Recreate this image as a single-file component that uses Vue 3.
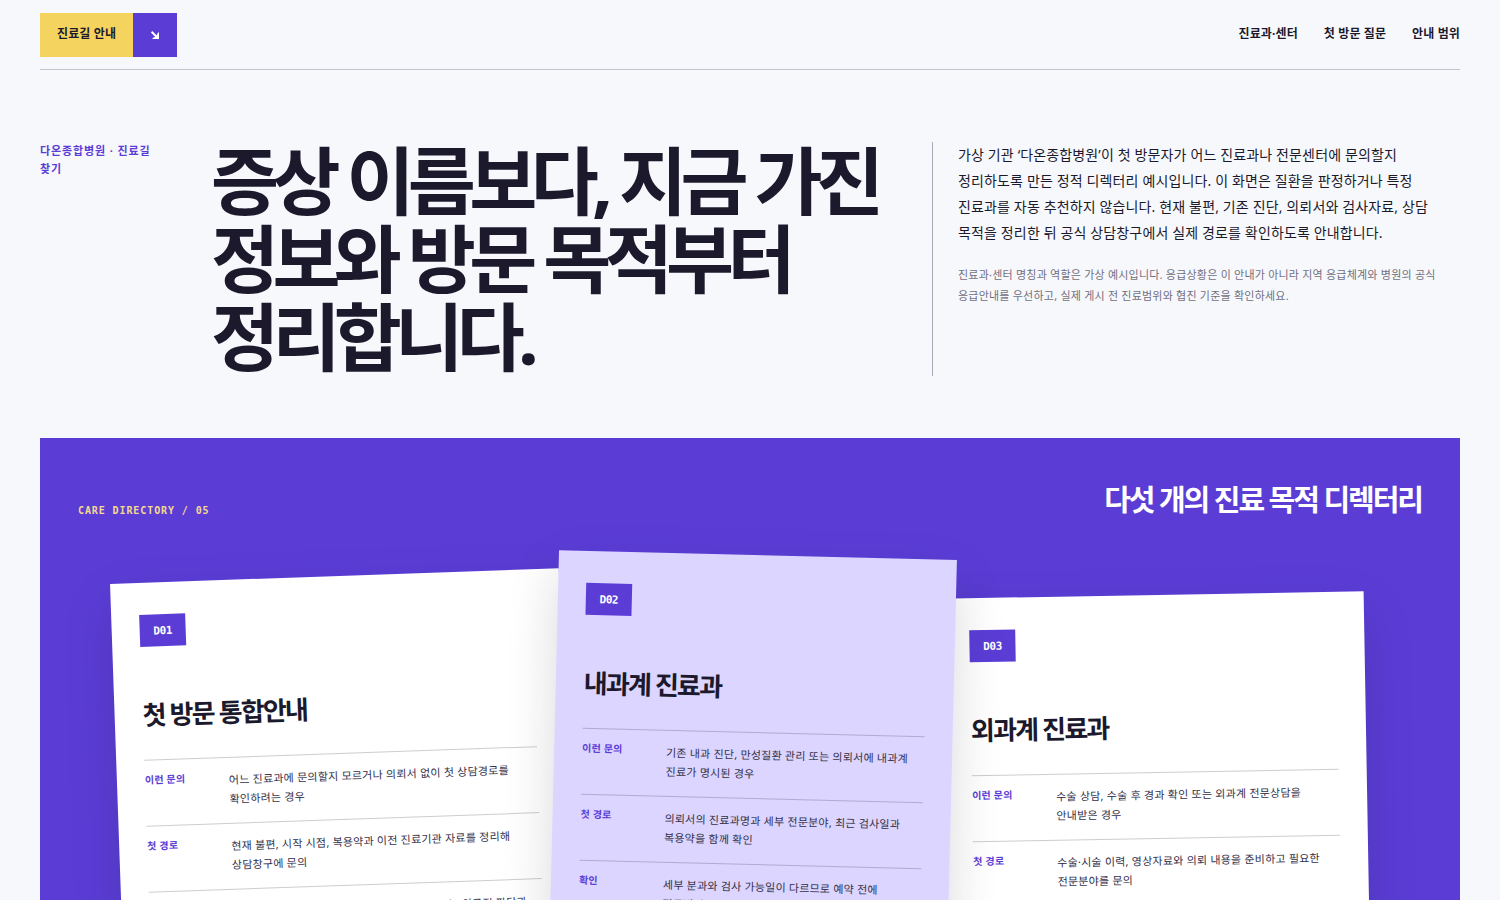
<script setup>
const links = [
  { label: '진료과·센터', href: '#directory' },
  { label: '첫 방문 질문', href: '#questions' },
  { label: '안내 범위', href: '#scope' }
]

const cards = [
  {
    code: 'D01',
    title: '첫 방문 통합안내',
    tone: 'first',
    rows: [
      ['이런 문의', '어느 진료과에 문의할지 모르거나 의뢰서 없이 첫 상담경로를 확인하려는 경우'],
      ['첫 경로', '현재 불편, 시작 시점, 복용약과 이전 진료기관 자료를 정리해 상담창구에 문의'],
      ['확인', '상담창구는 접수 경로만을 안내하므로, 증상 또는 의료적 판단과 예약 확정은 진료과에서 확인']
    ]
  },
  {
    code: 'D02',
    title: '내과계 진료과',
    tone: 'second',
    rows: [
      ['이런 문의', '기존 내과 진단, 만성질환 관리 또는 의뢰서에 내과계 진료가 명시된 경우'],
      ['첫 경로', '의뢰서의 진료과명과 세부 전문분야, 최근 검사일과 복용약을 함께 확인'],
      ['확인', '세부 분과와 검사 가능일이 다르므로 예약 전에 진료범위를 확인']
    ]
  },
  {
    code: 'D03',
    title: '외과계 진료과',
    tone: 'third',
    rows: [
      ['이런 문의', '수술 상담, 수술 후 경과 확인 또는 외과계 전문상담을 안내받은 경우'],
      ['첫 경로', '수술·시술 이력, 영상자료와 의뢰 내용을 준비하고 필요한 전문분야를 문의'],
      ['확인', '수술 여부와 일정은 진료 후 담당 의료진과 확인']
    ]
  }
]
</script>

<template>
  <div class="page">
    <header class="bar">
      <a class="brand" href="#top">
        <span class="brand-name">진료길 안내</span>
        <span class="brand-mark">
          <svg viewBox="0 0 10 10" aria-hidden="true">
            <path d="M1.6 1.8 L6.8 7" />
            <path class="fill" d="M9 2 V9 H2 L3.8 7.2 H7.2 V3.8 Z" />
            <path class="fill" d="M8 4 V8 H4 Z" />
          </svg>
        </span>
      </a>
      <nav class="nav" aria-label="주요 메뉴">
        <a v-for="l in links" :key="l.href" :href="l.href">{{ l.label }}</a>
      </nav>
    </header>

    <main id="top">
      <section class="hero">
        <p class="eyebrow">다온종합병원 · 진료길 찾기</p>
        <h1>증상 이름보다, 지금 가진 정보와 방문 목적부터 정리합니다.</h1>
        <div class="intro">
          <p class="lead">가상 기관 ‘다온종합병원’이 첫 방문자가 어느 진료과나 전문센터에 문의할지 정리하도록 만든 정적 디렉터리 예시입니다. 이 화면은 질환을 판정하거나 특정 진료과를 자동 추천하지 않습니다. 현재 불편, 기존 진단, 의뢰서와 검사자료, 상담 목적을 정리한 뒤 공식 상담창구에서 실제 경로를 확인하도록 안내합니다.</p>
          <p class="note">진료과·센터 명칭과 역할은 가상 예시입니다. 응급상황은 이 안내가 아니라 지역 응급체계와 병원의 공식 응급안내를 우선하고, 실제 게시 전 진료범위와 협진 기준을 확인하세요.</p>
        </div>
      </section>

      <section id="directory" class="directory">
        <div class="directory-head">
          <p>CARE DIRECTORY / 05</p>
          <h2>다섯 개의 진료 목적 디렉터리</h2>
        </div>
        <div class="cards">
          <article v-for="c in cards" :key="c.code" class="card" :class="c.tone">
            <span class="code">{{ c.code }}</span>
            <h3>{{ c.title }}</h3>
            <dl>
              <div v-for="r in c.rows" :key="r[0]" class="row">
                <dt>{{ r[0] }}</dt>
                <dd>{{ r[1] }}</dd>
              </div>
            </dl>
          </article>
        </div>
      </section>
    </main>
  </div>
</template>

<style>
body {
  margin: 0;
  background: #f7f8fc;
}
</style>

<style scoped>
.page {
  padding: 0 40px 80px;
  overflow-x: hidden;
  color: #1b192b;
  font-family: "Noto Sans", "Noto Sans CJK KR", sans-serif;
  word-break: keep-all;
}

p, h1, h2, h3, dl, dd {
  margin: 0;
}

a {
  color: inherit;
  text-decoration: none;
}

.bar {
  display: flex;
  align-items: center;
  justify-content: space-between;
  padding: 13px 0 12px;
  border-bottom: 1px solid #c4c4cf;
}

.brand {
  display: flex;
  height: 44px;
  font-size: 12px;
  font-weight: 700;
  line-height: 20px;
  letter-spacing: 0.01em;
}

.brand-name {
  display: flex;
  align-items: center;
  padding: 0 17px 2px;
  background: #f4d35e;
}

.brand-mark {
  display: grid;
  place-items: center;
  width: 44px;
  background: #5b3dd6;
}

.brand-mark svg {
  width: 10px;
  height: 10px;
  fill: none;
  stroke: #fff;
  stroke-width: 2;
}

.brand-mark .fill {
  fill: #fff;
  stroke: none;
}

.nav {
  display: flex;
  gap: 26px;
  padding-bottom: 2px;
  font-size: 12px;
  font-weight: 700;
  line-height: 20px;
  letter-spacing: 0.01em;
}

.hero {
  display: grid;
  grid-template-columns: 120px minmax(0, 670px) minmax(0, 528px);
  column-gap: 51px;
  padding: 72px 0 62px;
}

.eyebrow {
  color: #5b3dd6;
  font-size: 11px;
  font-weight: 700;
  line-height: 18px;
  letter-spacing: 0.08em;
}

h1 {
  font-size: 74px;
  font-weight: 700;
  line-height: 78px;
  letter-spacing: -0.09em;
}

.intro {
  padding-left: 25px;
  border-left: 1px solid #a9a9b8;
}

.lead {
  font-size: 14px;
  line-height: 26px;
  letter-spacing: 0.01em;
}

.note {
  margin-top: 18px;
  color: #706f80;
  font-size: 11px;
  line-height: 21px;
  letter-spacing: 0.02em;
}

.directory {
  padding: 38px 38px 80px;
  background: #5b3dd6;
}

.directory-head {
  display: flex;
  align-items: flex-end;
  justify-content: space-between;
  color: #fff;
}

.directory-head p {
  color: #f4d98f;
  font-family: "DejaVu Sans Mono", monospace;
  font-size: 10px;
  font-weight: 700;
  line-height: 26px;
  letter-spacing: 0.09em;
}

h2 {
  font-size: 29px;
  font-weight: 700;
  line-height: 48px;
  letter-spacing: -0.07em;
}

.cards {
  display: grid;
  grid-template-columns: 436fr 391fr 423fr;
  align-items: start;
  padding: 31px 55px 0 39px;
}

.card {
  padding: 32px 28px;
  background: #fff;
  box-shadow: 0 20px 50px rgba(27, 25, 43, 0.16);
}

.first {
  margin: 21px -13px 0 0;
  transform: rotate(-2deg);
}

.second {
  z-index: 1;
  margin: 0 -8px 0 1px;
  background: #dcd5ff;
  transform: rotate(1.4deg);
}

.third {
  margin-top: 40px;
  transform: rotate(-1deg);
}

.code {
  display: grid;
  place-items: center;
  width: 46px;
  height: 32px;
  color: #fff;
  background: #5b3dd6;
  font-family: "DejaVu Sans Mono", monospace;
  font-size: 11px;
  font-weight: 700;
  letter-spacing: -0.04em;
}

h3 {
  margin: 49px 0 25px;
  font-size: 26px;
  font-weight: 700;
  line-height: 39px;
  letter-spacing: -0.07em;
}

.row {
  display: grid;
  grid-template-columns: 70px minmax(0, 1fr);
  gap: 14px;
  padding: 12px 0 15px;
  border-top: 1px solid rgba(27, 25, 43, 0.22);
}

dt {
  color: #5b3dd6;
  font-size: 10px;
  font-weight: 700;
  line-height: 14px;
  letter-spacing: 0.02em;
}

dd {
  color: #33314a;
  font-size: 11px;
  line-height: 19px;
  letter-spacing: 0.02em;
}
</style>
